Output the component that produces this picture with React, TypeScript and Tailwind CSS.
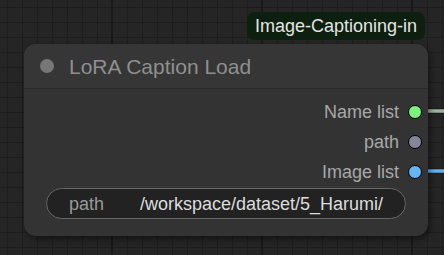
import React from "react";

function Grid() {
  const minor: number[] = [];
  for (let v = 7; v < 460; v += 15) minor.push(v);
  return (
    <svg className="absolute inset-0" width="444" height="255">
      <rect width="444" height="255" fill="#252525" />
      {minor.map((x) => (
        <line key={"vx" + x} x1={x + 0.5} y1={0} x2={x + 0.5} y2={255} stroke="#1d1d1d" strokeWidth={1} />
      ))}
      {minor.map((y) => (
        <line key={"hy" + y} x1={0} y1={y + 0.5} x2={444} y2={y + 0.5} stroke="#1d1d1d" strokeWidth={1} />
      ))}
      {[112, 262, 412].map((x) => (
        <line key={"mx" + x} x1={x} y1={0} x2={x} y2={255} stroke="#191919" strokeWidth={2} />
      ))}
      <line x1={420} y1={111} x2={444} y2={111} stroke="#1c1c1c" strokeWidth={6} />
      <line x1={420} y1={111} x2={444} y2={111} stroke="#9db39d" strokeWidth={3.5} />
      <line x1={420} y1={171} x2={444} y2={171} stroke="#1c1c1c" strokeWidth={6} />
      <line x1={420} y1={171} x2={444} y2={171} stroke="#5cb3f5" strokeWidth={3.5} />
    </svg>
  );
}

function Slot({ label, color }: { label: string; color: string }) {
  return (
    <div className="flex h-[30px] items-center justify-end">
      <span className="text-[18px] leading-none text-[#a8a8a8]">{label}</span>
      <span
        className="ml-[9px] mr-[6px] h-[14px] w-[14px] rounded-full border-[1.5px] border-black"
        style={{ backgroundColor: color }}
      />
    </div>
  );
}

export default function App() {
  return (
    <div
      className="relative h-[255px] w-[444px] overflow-hidden"
      style={{ fontFamily: '"Liberation Sans", Arial, sans-serif' }}
    >
      <Grid />
      <div className="relative flex w-[404px] flex-col pt-[12px] ml-[24px]">
        <div className="self-end mr-[3px] flex h-[28px] items-center rounded-[8px] bg-[#0d1f0f] px-[8px]">
          <span className="text-[18px] leading-none text-[#e4e4e4]">Image-Captioning-in</span>
        </div>
        <div className="mt-[4px] flex h-[192px] flex-col rounded-[12px] bg-[#333333] shadow-[2px_3px_6px_rgba(0,0,0,0.45)]">
          <div className="flex h-[45px] items-center rounded-t-[12px] border-b border-[#2a2a2a] bg-[#363636] pl-[16px]">
            <span className="h-[14px] w-[14px] rounded-full bg-[#777777]" />
            <span className="ml-[15px] text-[21px] leading-none text-[#8f8f8f]">LoRA Caption Load</span>
          </div>
          <div className="flex flex-col pt-[8px]">
            <Slot label="Name list" color="#7bf27b" />
            <Slot label="path" color="#86869a" />
            <Slot label="Image list" color="#64b5f6" />
          </div>
          <div className="mx-[22px] mt-[1px] flex h-[31px] items-center justify-between rounded-full border border-[#666666] bg-[#222222] px-[22px]">
            <span className="text-[18px] leading-none text-[#999999]">path</span>
            <span className="text-[18px] leading-none text-[#dddddd]">/workspace/dataset/5_Harumi/</span>
          </div>
        </div>
      </div>
    </div>
  );
}
